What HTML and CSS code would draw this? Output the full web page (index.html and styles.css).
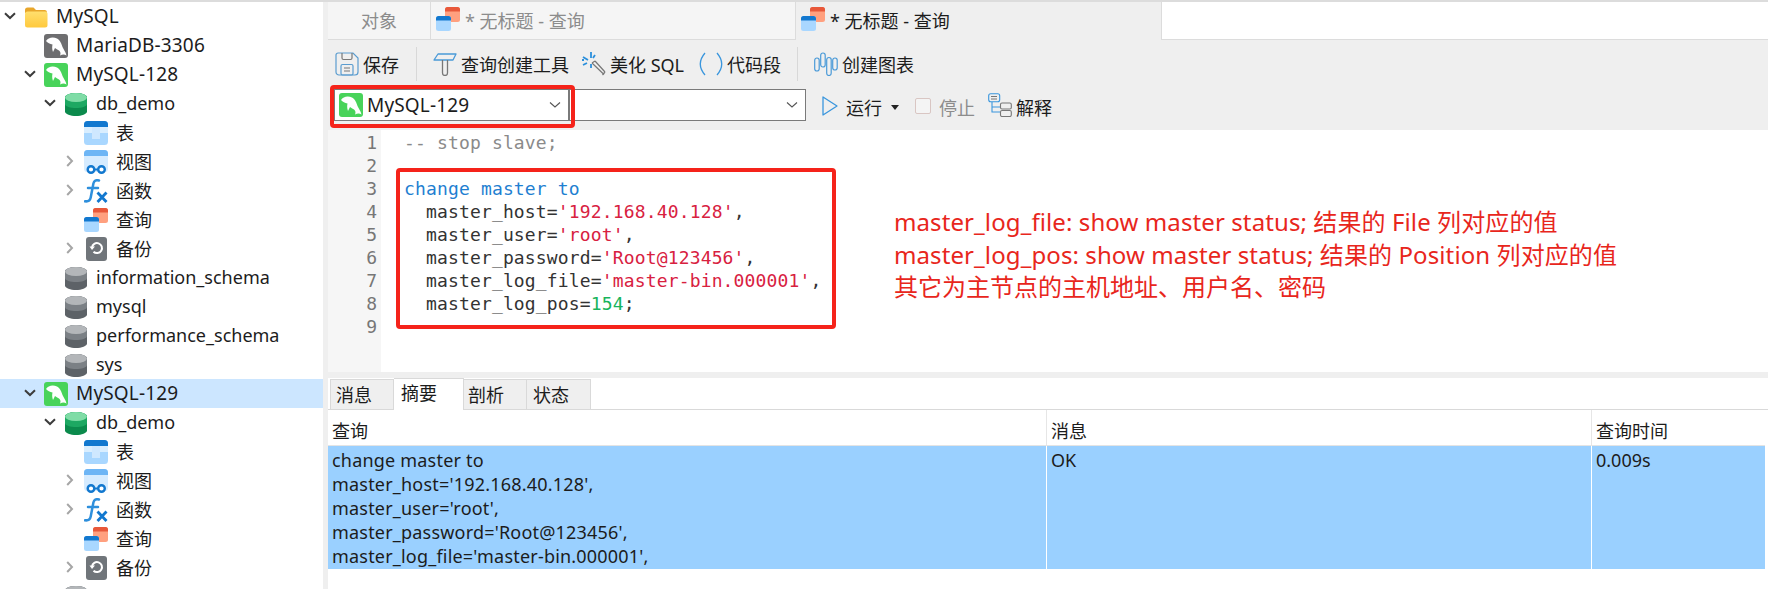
FILE: index.html
```html
<!DOCTYPE html>
<html lang="zh">
<head>
<meta charset="utf-8">
<title>MySQL</title>
<link rel="stylesheet" href="styles.css">
</head>
<body>
<svg class="defs" width="0" height="0" aria-hidden="true">
  <defs>
    <linearGradient id="gf" x1="0" y1="0" x2="0" y2="1"><stop offset="0" stop-color="#ffdf6e"/><stop offset="1" stop-color="#ffc93d"/></linearGradient>
    <symbol id="dolphin" viewBox="0 0 24 24"><path d="M2 7C4 3.500 9 2.500 13 4.500c3.500 2 4.500 5.500 5.500 8.500 1 2.500 3 4.500 4 8.500-2-1.500-4-1.500-6.500 0 1-2 .5-4-1-5-1.500-.7-3-1.500-4-2.500L9 18c-1-2.500-1-5.500-.5-7.500C6 10 3.500 9 2 7Z" fill="#fff"/></symbol>
    <symbol id="srv-green" viewBox="0 0 24 24"><rect width="24" height="24" rx="3" fill="#48d35a"/><use href="#dolphin"/></symbol>
    <symbol id="srv-gray" viewBox="0 0 24 24"><rect width="24" height="24" rx="3" fill="#6e6e70"/><use href="#dolphin"/></symbol>
    <symbol id="folder" viewBox="0 0 24 24"><path d="M1 5a2.500 2.500 0 0 1 2.500-2.500h6L12 5h9a2.500 2.500 0 0 1 2 2.500V8H1Z" fill="#e8a62b"/><rect x="1" y="6.500" width="22.500" height="16" rx="2.500" fill="url(#gf)"/></symbol>
    <symbol id="db-green" viewBox="0 0 24 24"><path d="M1 5.500C1 3 6.500 1 12 1s11 2 11 4.500v14c0 2.500-5.500 4.500-11 4.500s-11-2-11-4.500Z" fill="#0b8a4c"/><path d="M1 5.500C1 3 6.500 1 12 1s11 2 11 4.500v6.500c0 2.500-5.500 4-11 4s-11-1.500-11-4Z" fill="#1da862"/><ellipse cx="12" cy="5.500" rx="11" ry="4.500" fill="#7fdca6"/></symbol>
    <symbol id="db-gray" viewBox="0 0 24 24"><path d="M1 5.500C1 3 6.500 1 12 1s11 2 11 4.500v14c0 2.500-5.500 4.500-11 4.500s-11-2-11-4.500Z" fill="#5d6267"/><path d="M1 5.500C1 3 6.500 1 12 1s11 2 11 4.500v6.500c0 2.500-5.500 4-11 4s-11-1.500-11-4Z" fill="#7b8085"/><ellipse cx="12" cy="5.500" rx="11" ry="4.500" fill="#b3b6b9"/></symbol>
    <symbol id="table" viewBox="0 0 24 24"><rect y="0" width="24" height="24" rx="3.500" fill="#a9d7ff"/><rect x="8" y="6" width="8" height="12" fill="#cfe8ff"/><rect y="6" width="8" height="6" fill="#d9eeff"/><rect x="16" y="6" width="8" height="6" fill="#d9eeff"/><path d="M0 6V3.500A3.500 3.500 0 0 1 3.500 0h17A3.500 3.500 0 0 1 24 3.500V6Z" fill="#1278cf"/></symbol>
    <symbol id="view" viewBox="0 0 24 24"><rect y="0" width="24" height="22" rx="3.500" fill="#d5ebff"/><path d="M0 6V3.500A3.500 3.500 0 0 1 3.500 0h17A3.500 3.500 0 0 1 24 3.500V6Z" fill="#6db5f5"/><circle cx="7" cy="19.500" r="3.300" fill="#fff" stroke="#1278cf" stroke-width="2.400"/><circle cx="17.500" cy="19.500" r="3.300" fill="#fff" stroke="#1278cf" stroke-width="2.400"/><path d="M10 19.500h4.500" stroke="#1278cf" stroke-width="2"/></symbol>
    <symbol id="fx" viewBox="0 0 24 24"><path d="M15 1.500c-3-.9-5 .3-5.600 3l-2.700 14c-.5 2.600-2.500 4.200-5.700 3.800M4 9h10" fill="none" stroke="#2e8fdc" stroke-width="2.500" stroke-linecap="round"/><path d="M13.500 13.500l9 9.500M22.500 13.500 13.500 23" fill="none" stroke="#1278cf" stroke-width="2.800"/></symbol>
    <symbol id="query" viewBox="0 0 24 24"><rect x="9" y="0" width="15" height="15" rx="2.500" fill="#ffa07f"/><path d="M9 4.500V2.500A2.500 2.500 0 0 1 11.500 0h10A2.500 2.500 0 0 1 24 2.500V4.500Z" fill="#e8583a"/><rect x="0" y="9" width="15" height="15" rx="2.500" fill="#a9d7ff"/><path d="M0 13.500V11.500A2.500 2.500 0 0 1 2.500 9h10A2.500 2.500 0 0 1 15 11.500V13.500Z" fill="#1278cf"/></symbol>
    <symbol id="backup" viewBox="0 0 24 24"><rect x="2" y="0" width="21" height="24" rx="3" fill="#70757a"/><path d="M8 10.500a5 5 0 1 1 1.500 4.200" fill="none" stroke="#fff" stroke-width="2"/><path d="M5.500 9.500h5.500L8 13Z" fill="#fff"/></symbol>
    <symbol id="down" viewBox="0 0 12 8"><path d="M1 1.200 6 6l5-4.800" fill="none" stroke="#3c3c3c" stroke-width="2"/></symbol>
    <symbol id="right" viewBox="0 0 8 12"><path d="M1.200 1 6 6l-4.800 5" fill="none" stroke="#a6a6a6" stroke-width="2"/></symbol>
    <symbol id="thin" viewBox="0 0 12 8"><path d="M1 1.500 6 6l5-4.500" fill="none" stroke="#555" stroke-width="1.100"/></symbol>
  </defs>
</svg>

<aside class="tree">
  <div class="row srv"><svg class="tw"><use href="#down" x="4" y="10" width="12" height="8"/></svg><svg class="ic"><use href="#folder"/></svg><span>MySQL</span></div>
  <div class="row l1 srv"><span class="tw"></span><svg class="ic"><use href="#srv-gray"/></svg><span>MariaDB-3306</span></div>
  <div class="row l1 srv"><svg class="tw"><use href="#down" x="4" y="10" width="12" height="8"/></svg><svg class="ic"><use href="#srv-green"/></svg><span>MySQL-128</span></div>
  <div class="row l2"><svg class="tw"><use href="#down" x="4" y="10" width="12" height="8"/></svg><svg class="ic"><use href="#db-green"/></svg><span>db_demo</span></div>
  <div class="row l3"><span class="tw"></span><svg class="ic"><use href="#table"/></svg><span>表</span></div>
  <div class="row l3"><svg class="tw"><use href="#right" x="6" y="8" width="8" height="12"/></svg><svg class="ic"><use href="#view"/></svg><span>视图</span></div>
  <div class="row l3"><svg class="tw"><use href="#right" x="6" y="8" width="8" height="12"/></svg><svg class="ic"><use href="#fx"/></svg><span>函数</span></div>
  <div class="row l3"><span class="tw"></span><svg class="ic"><use href="#query"/></svg><span>查询</span></div>
  <div class="row l3"><svg class="tw"><use href="#right" x="6" y="8" width="8" height="12"/></svg><svg class="ic"><use href="#backup"/></svg><span>备份</span></div>
  <div class="row l2"><span class="tw"></span><svg class="ic"><use href="#db-gray"/></svg><span>information_schema</span></div>
  <div class="row l2"><span class="tw"></span><svg class="ic"><use href="#db-gray"/></svg><span>mysql</span></div>
  <div class="row l2"><span class="tw"></span><svg class="ic"><use href="#db-gray"/></svg><span>performance_schema</span></div>
  <div class="row l2"><span class="tw"></span><svg class="ic"><use href="#db-gray"/></svg><span>sys</span></div>
  <div class="row l1 srv sel"><svg class="tw"><use href="#down" x="4" y="10" width="12" height="8"/></svg><svg class="ic"><use href="#srv-green"/></svg><span>MySQL-129</span></div>
  <div class="row l2"><svg class="tw"><use href="#down" x="4" y="10" width="12" height="8"/></svg><svg class="ic"><use href="#db-green"/></svg><span>db_demo</span></div>
  <div class="row l3"><span class="tw"></span><svg class="ic"><use href="#table"/></svg><span>表</span></div>
  <div class="row l3"><svg class="tw"><use href="#right" x="6" y="8" width="8" height="12"/></svg><svg class="ic"><use href="#view"/></svg><span>视图</span></div>
  <div class="row l3"><svg class="tw"><use href="#right" x="6" y="8" width="8" height="12"/></svg><svg class="ic"><use href="#fx"/></svg><span>函数</span></div>
  <div class="row l3"><span class="tw"></span><svg class="ic"><use href="#query"/></svg><span>查询</span></div>
  <div class="row l3"><svg class="tw"><use href="#right" x="6" y="8" width="8" height="12"/></svg><svg class="ic"><use href="#backup"/></svg><span>备份</span></div>
  <div class="row l2"><span class="tw"></span><svg class="ic"><use href="#db-gray"/></svg></div>
</aside>

<main class="main">
  <nav class="tabs">
    <div class="tab objects">对象</div>
    <div class="tab doc"><svg class="tab-ic"><use href="#query"/></svg><span>* 无标题 - 查询</span></div>
    <div class="tab doc active"><svg class="tab-ic"><use href="#query"/></svg><span>* 无标题 - 查询</span></div>
    <div class="tab-rest"></div>
  </nav>

  <div class="toolbar">
    <div class="tool save">
      <svg class="ti" viewBox="0 0 24 24"><path d="M3 1h15l5 5v14a3 3 0 0 1-3 3H4a3 3 0 0 1-3-3V3a2 2 0 0 1 2-2Z" fill="none" stroke="#5a9ccf" stroke-width="1.200"/><path d="M7 1v5a1.500 1.500 0 0 0 1.500 1.500h7A1.500 1.500 0 0 0 17 6V1" fill="none" stroke="#777" stroke-width="1.200"/><rect x="6" y="12.500" width="12" height="10.500" rx="1.500" fill="none" stroke="#5a9ccf" stroke-width="1.200"/><path d="M9 16h6M9 19h6" stroke="#777" stroke-width="1.100"/></svg>
      <span>保存</span>
    </div>
    <i class="sep"></i>
    <div class="tool builder">
      <svg class="ti" viewBox="0 0 24 24"><path d="M5 2h18l-3 6H1Z" fill="none" stroke="#4a9ad8" stroke-width="1.300" stroke-linejoin="round"/><path d="M9.500 8v13a2.500 2.500 0 0 0 5 0V8" fill="none" stroke="#777" stroke-width="1.300"/></svg>
      <span>查询创建工具</span>
    </div>
    <div class="tool beautify">
      <svg class="ti" viewBox="0 0 24 24"><path d="M10 11 22 22.500M13 9l10 11M10 11l3-2M20.500 23l2.500-3" fill="none" stroke="#777" stroke-width="1.200"/><path d="M9 0v6M9 12v4M1 5l5 3M13 3l-2 3M1 13l4-2M0 8h2" fill="none" stroke="#2a8fdc" stroke-width="1.800"/></svg>
      <span>美化 SQL</span>
    </div>
    <div class="tool snippet">
      <svg class="ti" viewBox="0 0 24 24"><path d="M6 1C0 8 0 16 6 23M18 1c6 7 6 15 0 22" fill="none" stroke="#3a96dd" stroke-width="1.300"/></svg>
      <span>代码段</span>
    </div>
    <i class="sep sep2"></i>
    <div class="tool chart">
      <svg class="ti" viewBox="0 0 24 24"><rect x="0.700" y="6" width="4.500" height="13" rx="2.200" fill="none" stroke="#4a9ad8" stroke-width="1.200"/><rect x="6.700" y="1" width="4.500" height="14" rx="2.200" fill="none" stroke="#4a9ad8" stroke-width="1.200"/><rect x="12.700" y="5.500" width="4.500" height="18" rx="2.200" fill="none" stroke="#4a9ad8" stroke-width="1.200"/><rect x="18.700" y="6" width="4.500" height="12" rx="2.200" fill="none" stroke="#4a9ad8" stroke-width="1.200"/></svg>
      <span>创建图表</span>
    </div>
  </div>

  <div class="runbar">
    <div class="select conn"><svg class="sel-ic"><use href="#srv-green"/></svg><span class="sel-txt">MySQL-129</span><svg class="chev"><use href="#thin"/></svg></div>
    <div class="select dbsel"><svg class="chev"><use href="#thin"/></svg></div>
    <div class="tool run">
      <svg class="play" viewBox="0 0 16 20"><path d="M1 1 15 10 1 19Z" fill="none" stroke="#3a96dd" stroke-width="1.300" stroke-linejoin="round"/></svg>
      <span>运行</span><i class="caret"></i>
    </div>
    <div class="tool stop"><i class="box"></i><span>停止</span></div>
    <div class="tool explain">
      <svg class="ti" viewBox="0 0 24 24"><rect x="0.700" y="0.700" width="11" height="8" rx="2" fill="none" stroke="#3a96dd" stroke-width="1.100"/><path d="M3 3.500h6M3 6h6" stroke="#777" stroke-width="1"/><path d="M4 9v10h8M4 14h8" fill="none" stroke="#3a96dd" stroke-width="1.100"/><rect x="12.500" y="10" width="10.800" height="6" rx="1.500" fill="none" stroke="#777" stroke-width="1.100"/><rect x="12.500" y="17.500" width="10.800" height="6" rx="1.500" fill="none" stroke="#777" stroke-width="1.100"/></svg>
      <span>解释</span>
    </div>
    <div class="mark mark-select"></div>
  </div>

  <section class="editor">
    <div class="gutter"><div>1</div><div>2</div><div>3</div><div>4</div><div>5</div><div>6</div><div>7</div><div>8</div><div>9</div></div>
    <div class="code">
      <div class="ln c">-- stop slave;</div>
      <div class="ln"></div>
      <div class="ln k">change master to</div>
      <div class="ln">  master_host=<span class="s">'192.168.40.128'</span>,</div>
      <div class="ln">  master_user=<span class="s">'root'</span>,</div>
      <div class="ln">  master_password=<span class="s">'Root@123456'</span>,</div>
      <div class="ln">  master_log_file=<span class="s">'master-bin.000001'</span>,</div>
      <div class="ln">  master_log_pos=<span class="n">154</span>;</div>
    </div>
    <div class="mark mark-code"></div>
    <div class="note">
      <div class="wide">master_log_file: show master status; 结果的 File 列对应的值</div>
      <div class="wide">master_log_pos: show master status; 结果的 Position 列对应的值</div>
      <div>其它为主节点的主机地址、用户名、密码</div>
    </div>
  </section>

  <section class="results">
    <div class="rtabs">
      <div class="rtab t1">消息</div>
      <div class="rtab on">摘要</div>
      <div class="rtab t3">剖析</div>
      <div class="rtab t4">状态</div>
    </div>
    <div class="grid">
      <div class="th">查询</div>
      <div class="th bl">消息</div>
      <div class="th bl">查询时间</div>
      <div class="td sql"><div>change master to</div><div>master_host='192.168.40.128',</div><div>master_user='root',</div><div>master_password='Root@123456',</div><div>master_log_file='master-bin.000001',</div></div>
      <div class="td bl">OK</div>
      <div class="td bl">0.009s</div>
    </div>
  </section>
</main>
</body>
</html>
```
FILE: styles.css
```css
* { box-sizing: border-box; }
html, body { margin: 0; height: 589px; overflow: hidden; }
body {
  display: flex;
  width: 1768px;
  background: #efefef;
  border-top: 2px solid #dcdcdc;
  font-family: "Noto Sans", "Noto Sans CJK SC", sans-serif;
  font-size: 18px;
  color: #1c1c1c;
}
.defs { position: absolute; }

/* tree */
.tree { width: 323px; flex: none; background: #fff; overflow: hidden; }
.row { display: flex; align-items: center; height: 29px; white-space: nowrap; }
.row > span:last-child { margin-left: 8px; line-height: 29px; }
.l1 { padding-left: 20px; }
.l2 { padding-left: 40px; }
.l3 { padding-left: 60px; }
.l3 > span:last-child { padding-top: 1px; }
.srv > span:last-child { font-size: 19px; letter-spacing: .15px; }
.sel { background: #cce6ff; }
.tw { width: 20px; height: 29px; flex: none; display: block; }
.ic { width: 24px; height: 24px; margin-left: 4px; flex: none; }

/* main column */
.main { margin-left: 5px; width: 1440px; flex: none; display: flex; flex-direction: column; }

.tabs { display: flex; height: 38px; flex: none; }
.tab { height: 38px; display: flex; align-items: center; border-bottom: 1px solid #dcdcdc; color: #8c8c8c; background: #f5f5f5; white-space: nowrap; }
.objects { width: 103px; justify-content: center; border-right: 1px solid #dcdcdc; padding-bottom: 2px; }
.doc { width: 365px; padding-left: 5px; border-right: 1px solid #dcdcdc; }
.doc span { margin-left: 5px; padding-bottom: 2px; }
.active { background: #efefef; border-bottom-color: #efefef; color: #1c1c1c; border-right: 0; width: 365px; }
.tab-ic { width: 24px; height: 24px; margin-top: -3px; flex: none; }
.tab-rest { flex: 1; background: #fff; border-left: 1px solid #dcdcdc; border-bottom: 1px solid #dcdcdc; }

.toolbar { display: flex; align-items: center; height: 44px; flex: none; padding-top: 3px; }
.tool { display: flex; align-items: center; white-space: nowrap; }
.ti { width: 24px; height: 24px; flex: none; }
.tool span { margin-left: 4px; }
.save { margin-left: 7px; }
.sep { width: 1px; height: 34px; background: #d8d8d8; flex: none; }
.toolbar .sep { margin-left: 17px; margin-right: 16px; }
.beautify { margin-left: 13px; }
.snippet { margin-left: 15px; }
.toolbar .sep2 { margin-left: 16px; margin-right: 16px; }

.runbar { display: flex; align-items: center; height: 46px; flex: none; position: relative; padding-bottom: 4px; }
.select { height: 32px; background: #fff; border: 1px solid #7a7a7a; display: flex; align-items: center; flex: none; }
.conn { width: 235px; margin-left: 6px; padding-left: 4px; }
.dbsel { width: 237px; justify-content: flex-end; }
.sel-ic { width: 24px; height: 24px; flex: none; }
.sel-txt { margin-left: 4px; flex: 1; font-size: 19px; letter-spacing: .15px; }
.chev { width: 12px; height: 8px; flex: none; margin-right: 7px; }
.run { margin-left: 16px; padding-top: 3px; }
.play { width: 16px; height: 20px; flex: none; margin-top: -1px; }
.run span { margin-left: 8px; }
.caret { width: 0; height: 0; border: 4.500px solid transparent; border-top: 5px solid #222; border-bottom: 0; margin-left: 9px; margin-top: 1px; }
.stop { margin-left: 16px; color: #8c8c8c; padding-top: 3px; }
.box { width: 16px; height: 16px; border: 1px solid #d9c6c3; border-radius: 2px; background: #f4f4f4; margin-top: -1px; }
.stop span { margin-left: 8px; }
.explain { margin-left: 13px; }
.explain span { padding-top: 3px; }

.mark { position: absolute; border: 4px solid #f5231a; border-radius: 4px; }
.mark-select { left: 2px; top: 1px; width: 245px; height: 43px; }
.mark-code { left: 68px; top: 38px; width: 440px; height: 161px; }

.editor { height: 242px; flex: none; display: flex; background: #fff; position: relative; overflow: hidden; }
.gutter { width: 53px; flex: none; background: #f6f6f6; text-align: right; padding: 1px 4px 0 0; color: #777; font: 18px/23px "DejaVu Sans Mono", monospace; }
.code { padding: 1px 0 0 23px; font: 18px/23px "DejaVu Sans Mono", monospace; letter-spacing: .15px; color: #333; }
.ln { height: 23px; white-space: pre; }
.c { color: #8a8a8a; }
.k { color: #1f7fd1; }
.s { color: #d8213f; }
.n { color: #17b45c; }
.note { position: absolute; left: 566px; top: 76px; color: #e8261c; font-size: 24px; line-height: 32.500px; white-space: nowrap; }
.wide { letter-spacing: .1px; }

.results { margin-top: 6px; flex: 1; background: #fff; min-height: 0; }
.rtabs { display: flex; align-items: flex-end; height: 32px; padding-left: 2px; border-bottom: 1px solid #d9d9d9; }
.rtab { height: 30px; background: #efefef; border: 1px solid #d9d9d9; border-bottom: 0; border-left: 0; line-height: 30px; padding-left: 7px; }
.t1 { width: 64px; border-left: 1px solid #d9d9d9; padding-left: 5px; }
.on { width: 70px; height: 32px; background: #fff; border-top: 1px solid #d9d9d9; border-left: 0; padding-left: 7px; line-height: 29px; position: relative; top: 1px; }
.t3 { width: 63px; padding-left: 4px; }
.t4 { width: 64px; padding-left: 6px; }

.grid { display: grid; grid-template-columns: 718px 545px 174px; grid-template-rows: 36px 123px; }
.th { padding: 7px 0 0 4px; line-height: 28px; border-bottom: 1px solid #e4e4e4; }
.td { background: #9ad0ff; padding: 2px 0 0 4px; line-height: 24px; white-space: nowrap; }
.sql { letter-spacing: .2px; }
.bl { border-left: 1px solid #e6e6e6; }
.td.bl { border-left-color: #fff; }
```
